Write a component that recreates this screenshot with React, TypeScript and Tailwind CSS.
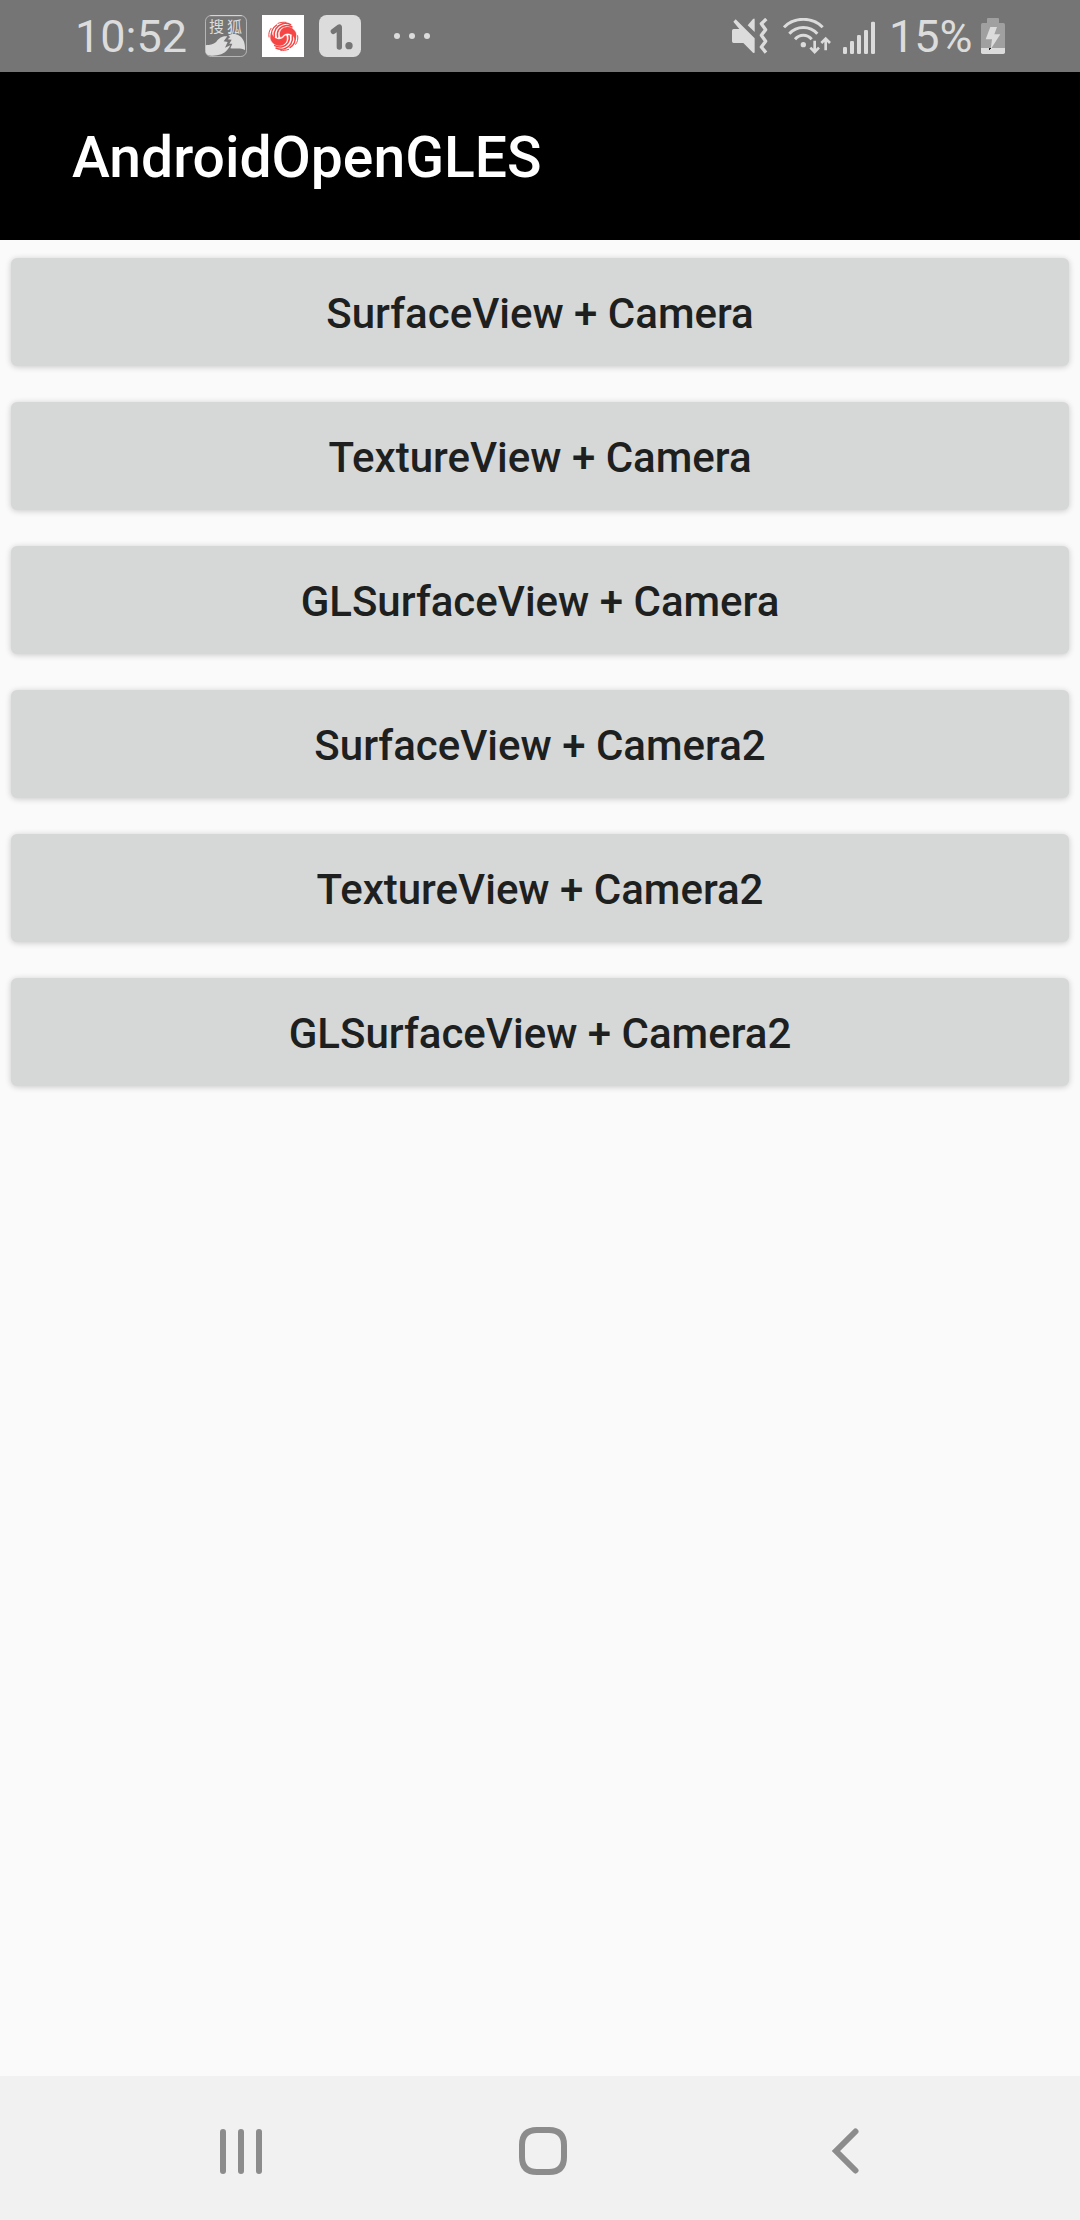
const buttons = [
  'SurfaceView + Camera',
  'TextureView + Camera',
  'GLSurfaceView + Camera',
  'SurfaceView + Camera2',
  'TextureView + Camera2',
  'GLSurfaceView + Camera2',
];

function SohuIcon() {
  return (
    <div className="relative h-[42px] w-[42px]">
      <svg className="h-full w-full" viewBox="0 0 126 126" fill="none">
        <rect x="1.5" y="1.5" width="123" height="123" rx="17" stroke="#b5b5b5" strokeWidth="3" />
        <path d="M16 2h94" stroke="#dcdcdc" strokeWidth="3" />
        <path
          d="M2 91C14 88 24 90 34 80C42 70 50 62 67 64L56 79L68 81L60 98L76 91C68 108 54 119 36 121C22 123 4 124 2 110Z"
          fill="#dcdcdc"
        />
        <path
          d="M70 62C78 56 92 55 104 63C116 71 121 86 120 105C106 97 92 102 76 100L82 86L73 86L80 74L68 73L76 66Z"
          fill="#dcdcdc"
        />
      </svg>
      <span className="absolute left-[4px] top-[3px] whitespace-nowrap font-['Noto_Sans_CJK_SC',sans-serif] text-[15px] leading-[16px] tracking-[3px] text-[#dcdcdc]">
        搜狐
      </span>
    </div>
  );
}

function SwirlIcon() {
  const arms = [0, 180];
  return (
    <svg className="ml-[15px] h-[42px] w-[42px] bg-white" viewBox="0 0 126 126" fill="none">
      {arms.map((a) => (
        <g key={a} transform={`rotate(${a} 64 64)`} stroke="#f54545" strokeLinecap="round">
          <path d="M55 66C51 54 55 43 66 38C80 32 94 38 101 52C104 60 102 68 99 76C98 66 92 58 82 56C74 54 66 56 60 65Z" fill="#f54545" strokeWidth="1" />
          <path d="M47 66C43 50 52 35 70 32C78 31 84 33 90 36" strokeWidth="4.5" />
          <path d="M37 66C34 48 44 32 60 27C68 24 78 25 86 29" strokeWidth="4.5" />
          <path d="M29 68C26 52 32 38 44 30" strokeWidth="4" />
          <path d="M21 66C19 56 22 46 27 40" strokeWidth="3" />
          <path d="M48 25C56 22 64 21 72 22" strokeWidth="3" />
        </g>
      ))}
    </svg>
  );
}

function OneIcon() {
  return (
    <svg className="ml-[15px] h-[42px] w-[42px]" viewBox="0 0 126 126" fill="none">
      <rect width="126" height="126" rx="23" fill="#dcdcdc" />
      <path d="M43 49L61 36V96" stroke="#757575" strokeWidth="16" strokeLinecap="round" strokeLinejoin="round" />
      <circle cx="90" cy="92" r="11" fill="#757575" />
    </svg>
  );
}

function MuteIcon() {
  return (
    <svg className="h-9 w-9" viewBox="0 0 108 108" fill="#dcdcdc">
      <path d="M5 33H22L4 11L11 4L68 61V102Q68 107 63 104L34 75H5Q0 75 0 70V38Q0 33 5 33Z" />
      <path d="M47 22L63 3Q68 -1 68 5V42Z" />
      <path d="M103 3L88 17L101 35L88 52L101 70L88 87L102 104" fill="none" stroke="#dcdcdc" strokeWidth="10" strokeLinejoin="round" />
    </svg>
  );
}

function WifiIcon() {
  return (
    <svg className="ml-[15px] h-9 w-12" viewBox="0 0 144 108" fill="none" stroke="#dcdcdc" strokeWidth="9">
      <path d="M3 28C33 -4 89 -4 119 28" />
      <path d="M19 47C41 22 81 22 103 47" />
      <path d="M36 64C50 48 72 48 86 64" />
      <circle cx="61" cy="80" r="8" fill="#dcdcdc" stroke="none" />
      <path d="M95 68V101M82 89L95 102L108 89M128 97V64M115 75L128 62L141 75" strokeWidth="8" />
    </svg>
  );
}

function SignalIcon() {
  return (
    <svg className="ml-3 h-9 w-8" viewBox="0 0 96 108" fill="#dcdcdc">
      <rect x="0" y="87" width="12" height="21" rx="4" />
      <rect x="21" y="69" width="12" height="39" rx="4" />
      <rect x="42" y="51" width="12" height="57" rx="4" />
      <rect x="63" y="36" width="12" height="72" rx="4" />
      <rect x="84" y="11" width="12" height="97" rx="4" />
    </svg>
  );
}

function BatteryIcon() {
  return (
    <svg className="h-9 w-6" viewBox="0 0 72 108">
      <path d="M18 3Q18 0 21 0H51Q54 0 54 3V15H67Q72 15 72 20V90H0V20Q0 15 5 15H18Z" fill="#a0a0a0" />
      <path d="M0 90H72V103Q72 108 67 108H5Q0 108 0 103Z" fill="#dcdcdc" />
      <path d="M28 27H48L40 49H58L29 94L33 64H14Z" fill="#dcdcdc" />
      <path d="M24 90H30V93H27V96H24Z" fill="#222" />
    </svg>
  );
}

export default function App() {
  return (
    <div className="flex h-[2220px] w-[1080px] flex-col bg-[#fafafa] font-[Roboto,sans-serif]">
      <header className="flex h-[72px] items-center bg-[#757575] text-[#dcdcdc]">
        <div className="ml-[75px] w-[130px] whitespace-nowrap pt-[2px] text-[45px] leading-[70px]">10:52</div>
        <SohuIcon />
        <SwirlIcon />
        <OneIcon />
        <div className="ml-[33px] flex gap-[9px]">
          <i className="size-1.5 rounded-full bg-[#dcdcdc]" />
          <i className="size-1.5 rounded-full bg-[#dcdcdc]" />
          <i className="size-1.5 rounded-full bg-[#dcdcdc]" />
        </div>
        <div className="ml-auto mr-[75px] flex items-center">
          <MuteIcon />
          <WifiIcon />
          <SignalIcon />
          <div className="ml-[14px] w-[92px] whitespace-nowrap pt-[2px] text-[45px] leading-[70px]">15%</div>
          <BatteryIcon />
        </div>
      </header>
      <div className="flex h-[168px] items-center bg-black pl-[72px] pt-[3px]">
        <h1 className="text-[57px] font-medium leading-[67px] text-white">AndroidOpenGLES</h1>
      </div>
      <main className="flex flex-1 flex-col gap-9 px-[11px] pt-[18px]">
        {buttons.map((label) => (
          <button
            key={label}
            className="h-[108px] rounded-[6px] bg-[#d6d8d7] pt-[3px] text-[42px] font-medium leading-[49px] text-[#1e1f1f] shadow-[0_1px_6px_rgba(0,0,0,0.2)]"
          >
            {label}
          </button>
        ))}
      </main>
      <nav className="flex h-36 items-center bg-[#f1f1f1] pt-1.5">
        <button className="ml-[220px] flex gap-3" aria-label="Recents">
          <i className="h-[45px] w-1.5 rounded-full bg-[#8c8c8c]" />
          <i className="h-[45px] w-1.5 rounded-full bg-[#8c8c8c]" />
          <i className="h-[45px] w-1.5 rounded-full bg-[#8c8c8c]" />
        </button>
        <button className="ml-[257px]" aria-label="Home">
          <svg className="size-12" viewBox="0 0 48 48" fill="none">
            <path d="M24 3H30C40 3 45 8 45 18V30C45 40 40 45 30 45H18C8 45 3 40 3 30V18C3 8 8 3 18 3Z" stroke="#8c8c8c" strokeWidth="6" />
          </svg>
        </button>
        <button className="ml-[262px]" aria-label="Back">
          <svg className="h-[46px] w-8" viewBox="0 0 32 46" fill="none">
            <path d="M26.5 3.5L7 23L26.5 42.5" stroke="#8c8c8c" strokeWidth="6" strokeLinecap="round" />
          </svg>
        </button>
      </nav>
    </div>
  );
}
